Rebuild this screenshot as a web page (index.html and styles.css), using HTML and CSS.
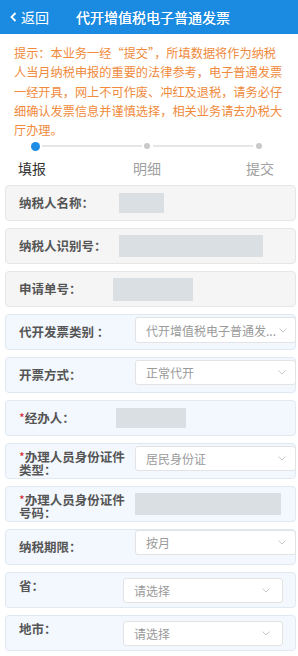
FILE: index.html
```html
<!DOCTYPE html>
<html lang="zh-CN">
<head>
<meta charset="utf-8">
<title>代开增值税电子普通发票</title>
<link rel="stylesheet" href="styles.css">
</head>
<body>
<header class="topbar">
  <a class="back">
    <svg class="back-icon" width="7" height="10" viewBox="0 0 7 10"><polyline points="5.5,1 1.5,5 5.5,9" fill="none" stroke="#fff" stroke-width="1.8"/></svg>
    <span>返回</span>
  </a>
  <h1 class="title">代开增值税电子普通发票</h1>
</header>

<p class="notice">提示：本业务一经“提交”，所填数据将作为纳税<br>人当月纳税申报的重要的法律参考，电子普通发票<br>一经开具，网上不可作废、冲红及退税，请务必仔<br>细确认发票信息并谨慎选择，相关业务请去办税大<br>厅办理。</p>

<div class="steps">
  <div class="track">
    <span class="dot dot-active"></span>
    <span class="line"></span>
    <span class="dot"></span>
    <span class="line line-2"></span>
    <span class="dot"></span>
  </div>
  <div class="step-labels">
    <span class="step step-current">填报</span>
    <span class="step step-2">明细</span>
    <span class="step step-3">提交</span>
  </div>
</div>

<main class="form">
  <div class="card card-grey">
    <span class="label w100">纳税人名称：</span>
    <span class="ph ph-name"></span>
  </div>
  <div class="card card-grey">
    <span class="label w100">纳税人识别号：</span>
    <span class="ph ph-id"></span>
  </div>
  <div class="card card-grey">
    <span class="label w94">申请单号：</span>
    <span class="ph ph-no"></span>
  </div>
  <div class="card card-blue card-sel">
    <span class="label w116">代开发票类别 ：</span>
    <div class="select sel-a"><span class="sel-text">代开增值税电子普通发...</span><svg class="chev" width="8" height="5" viewBox="0 0 8 5"><polyline points="0.5,0.5 4,4 7.5,0.5" fill="none" stroke="#c8c8c8" stroke-width="1"/></svg></div>
  </div>
  <div class="card card-blue card-sel">
    <span class="label w116">开票方式：</span>
    <div class="select sel-b"><span class="sel-text">正常代开</span><svg class="chev" width="8" height="5" viewBox="0 0 8 5"><polyline points="0.5,0.5 4,4 7.5,0.5" fill="none" stroke="#c8c8c8" stroke-width="1"/></svg></div>
  </div>
  <div class="card card-blue">
    <span class="label w97"><span class="req">*</span>经办人：</span>
    <span class="ph ph-agent"></span>
  </div>
  <div class="card card-blue card-sel">
    <span class="label label-2l w116"><span class="req">*</span>办理人员身份证件类型：</span>
    <div class="select sel-c"><span class="sel-text">居民身份证</span><svg class="chev" width="8" height="5" viewBox="0 0 8 5"><polyline points="0.5,0.5 4,4 7.5,0.5" fill="none" stroke="#c8c8c8" stroke-width="1"/></svg></div>
  </div>
  <div class="card card-blue">
    <span class="label label-2l w116"><span class="req">*</span>办理人员身份证件号码：</span>
    <span class="ph ph-idno"></span>
  </div>
  <div class="card card-blue card-sel">
    <span class="label w116">纳税期限：</span>
    <div class="select sel-d"><span class="sel-text">按月</span><svg class="chev" width="8" height="5" viewBox="0 0 8 5"><polyline points="0.5,0.5 4,4 7.5,0.5" fill="none" stroke="#c8c8c8" stroke-width="1"/></svg></div>
  </div>
  <div class="card card-blue card-low">
    <span class="label w104">省：</span>
    <div class="select sel-e"><span class="sel-text">请选择</span><svg class="chev" width="8" height="5" viewBox="0 0 8 5"><polyline points="0.5,0.5 4,4 7.5,0.5" fill="none" stroke="#c8c8c8" stroke-width="1"/></svg></div>
  </div>
  <div class="card card-blue card-low">
    <span class="label w104">地市：</span>
    <div class="select sel-e"><span class="sel-text">请选择</span><svg class="chev" width="8" height="5" viewBox="0 0 8 5"><polyline points="0.5,0.5 4,4 7.5,0.5" fill="none" stroke="#c8c8c8" stroke-width="1"/></svg></div>
  </div>
</main>
</body>
</html>
```

FILE: styles.css
```css
* { box-sizing: border-box; }
html, body { margin: 0; padding: 0; }
body {
  width: 298px;
  background: #fff;
  font-family: "Noto Sans CJK SC", "Noto Sans", sans-serif;
  color: #333;
}

.topbar {
  height: 34px;
  background: #1b8be2;
  display: flex;
  align-items: center;
  color: #fff;
}
.back {
  display: flex;
  align-items: center;
  margin-left: 10px;
  font-size: 14px;
  line-height: 20px;
}
.back-icon { margin-right: 4px; }
.title {
  margin: 0 0 0 27px;
  font-size: 14px;
  font-weight: normal;
  line-height: 20px;
  text-shadow: 0 0 0.4px #fff;
}

.notice {
  margin: 0;
  padding: 10px 10px 0 14px;
  font-size: 12.2px;
  line-height: 19.3px;
  color: #f08a3c;
  white-space: nowrap;
}

.steps { margin-top: 1px; }
.track {
  display: flex;
  align-items: center;
  height: 10px;
}
.dot {
  width: 6px;
  height: 6px;
  border-radius: 50%;
  background: #c9c9c9;
  flex: none;
}
.dot-active {
  width: 9px;
  height: 9px;
  background: #1f8ce6;
  margin-left: 31px;
}
.line {
  height: 2px;
  background: #e6e6e6;
  width: 100px;
  margin: 0 2px 0 2px;
  flex: none;
}
.line-2 { margin: 0 3px 0 3px; }

.step-labels {
  display: flex;
  margin-top: 7px;
  font-size: 14px;
  line-height: 20px;
  color: #a0a0a0;
}
.step-current { color: #333; margin-left: 18px; }
.step-2 { margin-left: 87px; }
.step-3 { margin-left: 85px; }

.form { padding-top: 7px; }
.card {
  display: flex;
  align-items: center;
  height: 36px;
  margin: 0 2px 7px 5px;
  padding-left: 13px;
  border: 1px solid #e4e4e4;
  border-radius: 4px;
}
.card-grey { background: #f5f5f5; border-color: #e6e6e6; }
.card-blue { background: #f3f8fe; border-color: #e0e8f2; }

.label {
  flex: none;
  font-size: 12.5px;
  font-weight: bold;
  color: #555;
  line-height: 18px;
}
.label-2l { line-height: 13px; padding-top: 3px; white-space: normal; }
.w94 { width: 94px; }
.w97 { width: 97px; }
.w100 { width: 100px; }
.w104 { width: 104px; }
.w116 { width: 116px; padding-right: 4px; }
.req { color: #d2232a; font-weight: normal; }

.ph { display: block; background: #d9dfe3; flex: none; }
.ph-name { width: 45px; height: 20px; }
.ph-id { width: 144px; height: 22px; }
.ph-no { width: 80px; height: 23px; }
.ph-agent { width: 70px; height: 20px; }
.ph-idno { width: 146px; height: 22px; }

.select {
  flex: 1;
  display: flex;
  align-items: center;
  justify-content: space-between;
  height: 26px;
  margin-right: -1px;
  padding: 0 9px 0 10px;
  background: #fff;
  border: 1px solid #e3e3e3;
  border-radius: 3px;
  font-size: 12px;
  color: #9a9a9a;
  white-space: nowrap;
}
.sel-text { flex: none; }
.chev { flex: none; margin-left: 1px; }
.sel-a { padding-right: 8px; }
.card-sel { align-items: flex-start; }
.card-sel .label { align-self: center; }
.card-sel .select { margin-top: 2px; }
.sel-b, .sel-c, .sel-d { height: 25px; }
.card-sel .sel-d { margin-top: 0; }

.card-low { align-items: flex-start; }
.card-low .label { margin-top: 4px; }
.card-low .select {
  margin-top: 5px;
  margin-right: 12px;
  height: 25px;
  padding-right: 12px;
}
```
